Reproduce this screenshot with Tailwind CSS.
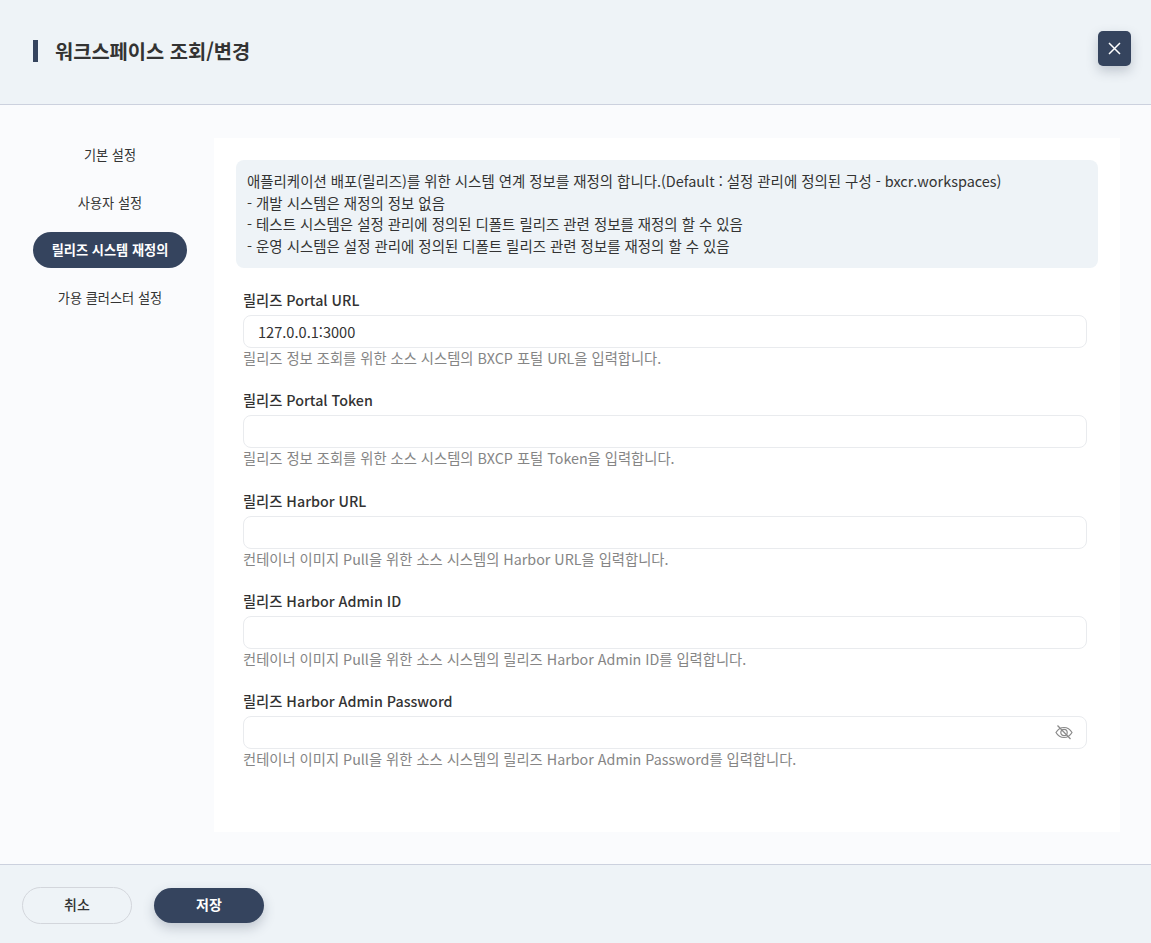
<!DOCTYPE html>
<html lang="ko">

<head>
    <meta charset="UTF-8">
    <meta name="viewport" content="width=device-width, initial-scale=1.0">
    <title>워크스페이스 조회/변경</title>
    <script src="https://cdn.jsdelivr.net/npm/@tailwindcss/browser@4"></script>
</head>

<body class="h-[943px] w-[1151px] overflow-hidden bg-[#fafbfd] font-['Noto_Sans_CJK_KR',sans-serif] text-[#333333]">

    <header class="flex h-[105px] items-center justify-between border-b border-[#ccd1de] bg-[#eef3f7] pl-[33px] pr-5">
        <div class="mb-[3px] flex items-center">
            <span class="h-[22px] w-[5px] bg-[#35445e]"></span>
            <h1 class="ml-[17px] text-[19.8px] leading-[22px] font-bold text-[#333333]">워크스페이스 조회/변경</h1>
        </div>
        <button class="mb-[8px] flex h-[35px] w-[33px] items-center justify-center rounded-[5px] bg-[#35445e] shadow-[0_5px_12px_rgba(52,65,89,0.25)]">
            <svg class="h-[13px] w-[13px]" viewBox="0 0 13 13" fill="none" stroke="white" stroke-width="1.5">
                <path d="M1 1l11 11M12 1L1 12" />
            </svg>
        </button>
    </header>

    <div class="flex h-[759px] pl-[33px] pt-[33px]">
        <nav class="-mt-[1px] flex w-[154px] flex-col gap-[11.5px] text-center text-[13.2px]">
            <a class="flex h-9 items-center justify-center">기본 설정</a>
            <a class="flex h-9 items-center justify-center">사용자 설정</a>
            <a class="flex h-9 items-center justify-center rounded-full bg-[#35445e] font-bold text-white">릴리즈 시스템 재정의</a>
            <a class="flex h-9 items-center justify-center">가용 클러스터 설정</a>
        </nav>

        <main class="ml-[27px] h-[694px] w-[906px] bg-white px-[22px] pt-[22px]">
            <div class="h-[108px] rounded-lg bg-[#eef3f7] px-[11px] pt-[10px] text-[14.45px] leading-[21.7px] text-[#333333]">
                <p>애플리케이션 배포(릴리즈)를 위한 시스템 연계 정보를 재정의 합니다.(Default : 설정 관리에 정의된 구성 - bxcr.workspaces)</p>
                <p>- 개발 시스템은 재정의 정보 없음</p>
                <p>- 테스트 시스템은 설정 관리에 정의된 디폴트 릴리즈 관련 정보를 재정의 할 수 있음</p>
                <p>- 운영 시스템은 설정 관리에 정의된 디폴트 릴리즈 관련 정보를 재정의 할 수 있음</p>
            </div>

            <form class="mt-[22px] flex w-[844px] flex-col gap-[22.25px] pl-[7px] box-content">
                <div>
                    <label class="block h-[25px] text-[14.28px] leading-5 font-medium text-[#333333]">릴리즈 Portal URL</label>
                    <input class="block h-[33px] w-[844px] rounded-lg border border-[#e9ebee] px-[14px] text-[14.6px] text-[#333333]" value="127.0.0.1:3000">
                    <p class="h-5 text-[14.3px] leading-5 text-[#858585]">릴리즈 정보 조회를 위한 소스 시스템의 BXCP 포털 URL을 입력합니다.</p>
                </div>
                <div>
                    <label class="block h-[25px] text-[14.28px] leading-5 font-medium text-[#333333]">릴리즈 Portal Token</label>
                    <input class="block h-[33px] w-[844px] rounded-lg border border-[#e9ebee] px-[14px] text-[14.6px]">
                    <p class="h-5 text-[14.3px] leading-5 text-[#858585]">릴리즈 정보 조회를 위한 소스 시스템의 BXCP 포털 Token을 입력합니다.</p>
                </div>
                <div>
                    <label class="block h-[25px] text-[14.28px] leading-5 font-medium text-[#333333]">릴리즈 Harbor URL</label>
                    <input class="block h-[33px] w-[844px] rounded-lg border border-[#e9ebee] px-[14px] text-[14.6px]">
                    <p class="h-5 text-[14.3px] leading-5 text-[#858585]">컨테이너 이미지 Pull을 위한 소스 시스템의 Harbor URL을 입력합니다.</p>
                </div>
                <div>
                    <label class="block h-[25px] text-[14.28px] leading-5 font-medium text-[#333333]">릴리즈 Harbor Admin ID</label>
                    <input class="block h-[33px] w-[844px] rounded-lg border border-[#e9ebee] px-[14px] text-[14.6px]">
                    <p class="h-5 text-[14.3px] leading-5 text-[#858585]">컨테이너 이미지 Pull을 위한 소스 시스템의 릴리즈 Harbor Admin ID를 입력합니다.</p>
                </div>
                <div>
                    <label class="block h-[25px] text-[14.28px] leading-5 font-medium text-[#333333]">릴리즈 Harbor Admin Password</label>
                    <div class="relative">
                        <input class="block h-[33px] w-[844px] rounded-lg border border-[#e9ebee] px-[14px] text-[14.6px]">
                        <svg class="absolute right-[14px] top-[7px] h-[18px] w-[18px]" viewBox="0 0 18 18" fill="none" stroke="#8a8a8a" stroke-width="1.2">
                            <path d="M1 9.500c2-3.400 4.800-5 8-5s6 1.600 8 5c-2 3.400-4.800 5-8 5s-6-1.600-8-5z" />
                            <circle cx="9" cy="9.500" r="3.200" />
                            <path d="M2.500 2.500l13 13.500" />
                        </svg>
                    </div>
                    <p class="h-5 text-[14.3px] leading-5 text-[#858585]">컨테이너 이미지 Pull을 위한 소스 시스템의 릴리즈 Harbor Admin Password를 입력합니다.</p>
                </div>
            </form>
        </main>
    </div>

    <footer class="flex h-[79px] items-center gap-[22px] border-t border-[#ccd1de] bg-[#eef3f7] pl-[22px] pt-[3px] text-sm">
        <button class="h-[37px] w-[110px] rounded-full border border-[#d3d6dc] pb-[4px] font-medium">취소</button>
        <button class="h-[35px] w-[110px] rounded-full bg-[#35445e] pb-[4px] font-bold text-white shadow-[0_5px_12px_rgba(52,65,89,0.25)]">저장</button>
    </footer>

</body>

</html>
